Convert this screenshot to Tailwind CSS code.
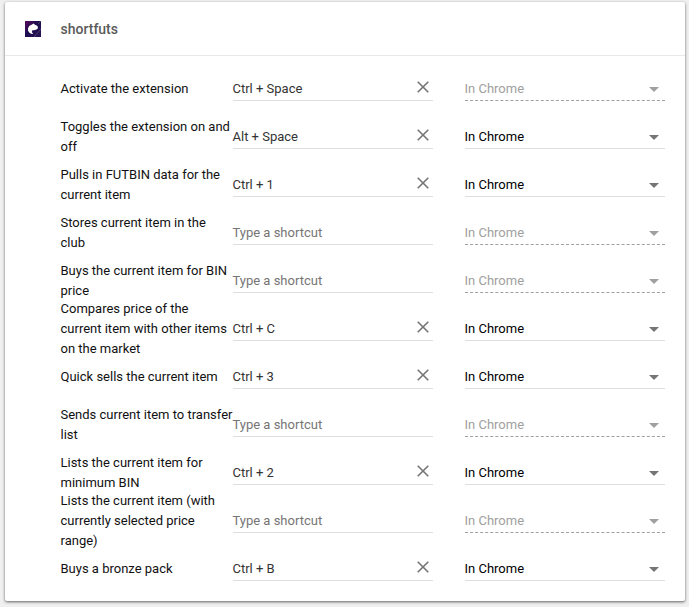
<!DOCTYPE html>
<html lang="en">
<head>
<meta charset="utf-8">
<title>Keyboard shortcuts</title>
<script src="https://cdn.jsdelivr.net/npm/@tailwindcss/browser@4"></script>
</head>
<body class="h-[607px] overflow-hidden bg-[#f0f0f0] pt-[2px] pl-[5px] font-[Roboto,sans-serif] text-[13px] leading-5 text-[#111]">
<main class="h-[599px] w-[680px] rounded-[2px] bg-white shadow-[0_1px_3px_rgba(0,0,0,0.6)]">
  <header class="flex h-[54px] items-center border-b border-[#e8e8e8] pl-5">
    <svg class="size-4" viewBox="0 0 16 16">
      <defs><linearGradient id="g" x2="1" y2="1"><stop stop-color="#5a0a5c"/><stop offset=".45" stop-color="#1d0d50"/><stop offset="1" stop-color="#281453"/></linearGradient></defs>
      <path fill="url(#g)" d="M0 0h16v16H0z"/>
      <path stroke="#59506c" stroke-width=".8" d="M9 16 16 8M13 3l3-3"/>
      <path fill="#fff" d="M3 7.5 4.2 5 7 3.5 8.5 2.4 9.6 3.5 12.5 5 13 7.2 11.5 8.6 9 9.3 7.4 9.2 6.8 11 8.3 13 6 12.8 4.2 11.6 3 9.5z"/>
    </svg>
    <h1 class="ml-[19.5px] text-[14px] font-medium text-[#5a5a5a]">shortfuts</h1>
  </header>
  <section id="commands" class="pt-2 pl-[55.5px]"></section>
</main>
<script>
const commands = [
  ['Activate the extension', 'Ctrl + Space', false],
  ['Toggles the extension on and off', 'Alt + Space', true],
  ['Pulls in FUTBIN data for the current item', 'Ctrl + 1', true],
  ['Stores current item in the club', '', false],
  ['Buys the current item for BIN price', '', false],
  ['Compares price of the<br>current item with other items on the market', 'Ctrl + C', true],
  ['Quick sells the current item', 'Ctrl + 3', true],
  ['Sends current item to transfer list', '', false],
  ['Lists the current item for minimum BIN', 'Ctrl + 2', true],
  ['Lists the current item (with currently selected price range)', '', false],
  ['Buys a bronze pack', 'Ctrl + B', true],
];
const clear = '<svg class="mr-1 mb-1 size-3" viewBox="0 0 12 12" fill="none" stroke="#757575" stroke-width="1.6"><path d="m.7.7 10.6 10.6M11.3.7.7 11.3"/></svg>';
document.getElementById('commands').innerHTML = commands.map(([name, key, enabled]) => `
  <div class="flex h-12 items-center">
    <div class="mt-[2px] w-[172.5px] shrink-0">${name}</div>
    <div class="mr-8 flex h-[25px] w-[200px] items-center justify-between border-b border-[#dedede] pt-[2px] ${key ? 'text-[#333]' : 'text-[#757575]'}">
      <span class="-ml-[0.5px]">${key || 'Type a shortcut'}</span>${key ? clear : ''}
    </div>
    <div class="flex h-[25px] w-[200px] items-center justify-between border-b pt-[2px] ${enabled ? 'border-[#dedede] text-black' : 'border-dashed border-[#a0a0a0] text-[#a0a0a0]'}">
      <span class="-ml-[0.5px]">In Chrome</span>
      <svg class="mt-[2px] mr-[6.5px] h-[5px] w-[10px]" viewBox="0 0 10 5"><path d="M0 0h10L5 5z" fill="${enabled ? '#757575' : '#a0a0a0'}"/></svg>
    </div>
  </div>`).join('');
</script>
</body>
</html>
